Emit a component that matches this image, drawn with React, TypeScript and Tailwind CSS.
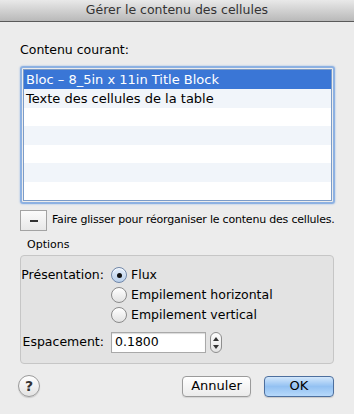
function Radio({ checked, label }: { checked?: boolean; label: string }) {
  return (
    <div className="flex h-[20px] items-center">
      <div
        className={
          checked
            ? "flex h-[16px] w-[16px] items-center justify-center rounded-full border border-[#6f86a8] bg-gradient-to-b from-[#e4eefb] to-[#b9cfea] shadow-[inset_0_1px_1px_rgba(255,255,255,0.9)]"
            : "flex h-[16px] w-[16px] items-center justify-center rounded-full border border-[#8a8a8a] bg-gradient-to-b from-[#ffffff] to-[#e2e2e2]"
        }
      >
        {checked && <div className="h-[5px] w-[5px] rounded-full bg-[#111]" />}
      </div>
      <span className="ml-[4px] text-[12.5px] text-black">{label}</span>
    </div>
  );
}

const rows = [
  "Bloc – 8_5in x 11in Title Block",
  "Texte des cellules de la table",
  "",
  "",
  "",
  "",
  "",
];

export default function App() {
  return (
    <div
      className="flex h-[414px] w-[354px] flex-col bg-[#ececec] text-black"
      style={{ fontFamily: '"DejaVu Sans", "Liberation Sans", sans-serif' }}
    >
      <div className="flex h-[22px] shrink-0 items-center justify-center border-b border-[#5a5a5a] bg-gradient-to-b from-[#e9e9e9] to-[#b9b9b9] text-[12.5px] text-[#333]">
        Gérer le contenu des cellules
      </div>

      <div className="flex flex-col px-[20px]">
        <div className="mt-[20px] text-[12.5px] leading-[16px]">Contenu courant:</div>

        <div className="mt-[8px] h-[138px] w-[315px] rounded-[3px] border-[2px] border-[#8db1e2] p-[1px] shadow-[0_0_2px_#8db1e2]">
          <div className="flex h-full flex-col border border-[#7c9cc8] bg-white">
            {rows.map((r, i) => (
              <div
                key={i}
                className={
                  i === 0
                    ? "flex h-[19px] items-center bg-[#3a76d6] pl-[2px] text-[13px] text-white"
                    : i % 2 === 1
                    ? "flex h-[19px] items-center bg-[#f1f5fa] pl-[2px] text-[13px]"
                    : "flex h-[19px] items-center bg-white pl-[2px] text-[13px]"
                }
              >
                {r}
              </div>
            ))}
          </div>
        </div>

        <div className="mt-[6px] flex items-center">
          <div className="flex h-[21px] w-[27px] shrink-0 items-center justify-center border border-[#a3a3a3] bg-gradient-to-b from-[#fbfbfb] to-[#e8e8e8]">
            <div className="h-[2px] w-[8px] bg-[#333]" />
          </div>
          <span className="ml-[5px] whitespace-nowrap text-[11px] tracking-[-0.2px]">
            Faire glisser pour réorganiser le contenu des cellules.
          </span>
        </div>

        <div className="ml-[7px] mt-[7px] text-[11px] leading-[14px]">Options</div>

        <div className="mt-[3px] flex w-[314px] flex-col rounded-[4px] border border-[#c6c6c6] bg-[#e3e3e3] pb-[10px] pt-[9px]">
          <div className="flex">
            <div className="flex h-[20px] w-[83px] items-center justify-end text-[12.5px]">Présentation:</div>
            <div className="ml-[7px] flex flex-col">
              <Radio checked label="Flux" />
              <Radio label="Empilement horizontal" />
              <Radio label="Empilement vertical" />
            </div>
          </div>
          <div className="mt-[7px] flex items-center">
            <div className="w-[83px] text-right text-[12.5px]">Espacement:</div>
            <div className="ml-[7px] flex h-[21px] w-[95px] items-center border border-[#a9a9a9] bg-white pl-[3px] text-[12.5px] shadow-[inset_0_1px_1px_rgba(0,0,0,0.15)]">
              0.1800
            </div>
            <div className="ml-[4px] flex h-[21px] w-[12px] flex-col items-center justify-center rounded-full border border-[#8e8e8e] bg-gradient-to-b from-[#fdfdfd] to-[#e4e4e4]">
              <svg width="6" height="14" viewBox="0 0 6 14">
                <path d="M3 1 L6 5 L0 5 Z" fill="#333" />
                <path d="M0 9 L6 9 L3 13 Z" fill="#333" />
              </svg>
            </div>
          </div>
        </div>

        <div className="mt-[11px] flex items-center">
          <div className="-ml-[2px] flex h-[22px] w-[22px] items-center justify-center rounded-full border border-[#9a9a9a] bg-gradient-to-b from-[#ffffff] to-[#e3e3e3] text-[14px] font-bold text-[#333] shadow-[0_1px_1px_rgba(0,0,0,0.15)]">
            ?
          </div>
          <div className="flex-1" />
          <div className="flex h-[21px] w-[69px] items-center justify-center rounded-[4px] border border-[#9b9b9b] bg-gradient-to-b from-[#ffffff] to-[#ebebeb] text-[13px] shadow-[0_1px_1px_rgba(0,0,0,0.1)]">
            Annuler
          </div>
          <div className="ml-[13px] flex h-[21px] w-[70px] items-center justify-center rounded-[4px] border border-[#4d6f9e] bg-gradient-to-b from-[#d3e7fb] via-[#93c1f2] to-[#b7d9fb] text-[13px] shadow-[0_1px_1px_rgba(0,0,0,0.15)]">
            OK
          </div>
        </div>
      </div>
    </div>
  );
}
